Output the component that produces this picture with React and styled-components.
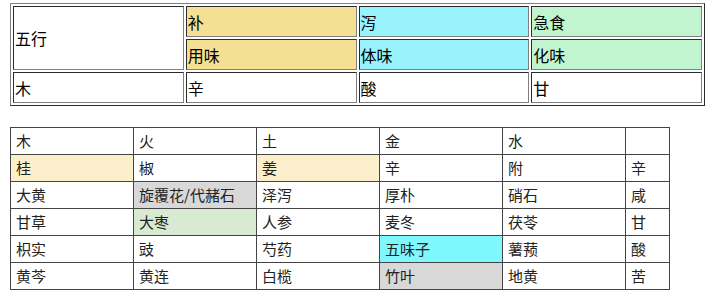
import React from "react";
import styled, { createGlobalStyle } from "styled-components";

const GlobalStyle = createGlobalStyle`
  body {
    margin: 0;
    padding: 3px 10px;
    background: #fff;
    font-family: "Noto Sans CJK SC", "Noto Sans", sans-serif;
    color: #000;
  }
`;

// Color fills used by cells
const fills = {
  bu: "#f5df93",
  xie: "#98f3fd",
  ji: "#c1f5cf",
  cream: "#fcf0cc",
  gray: "#d8d8d8",
  green: "#d9ead3",
  cyan: "#7ef8fc",
  none: "transparent",
};

// Top summary table: classic border="1" look
const WuxingTable = styled.table`
  width: 695px;
  border: 1px outset #808080;
  border-spacing: 2px;
  font-size: 16px;
`;

const WCell = styled.td`
  width: 25%;
  height: 27px;
  padding: 1px;
  border: 1px inset #808080;
  background: ${(p) => fills[p.$fill || "none"]};
  vertical-align: middle;
  line-height: 22px;
`;

// Lower herb table
const HerbTable = styled.table`
  margin-top: 21px;
  width: 659px;
  table-layout: fixed;
  border-collapse: collapse;
  font-size: 15px;
  color: #222;
`;

const HCell = styled.td`
  width: ${(p) => (p.$narrow ? "33px" : "112px")};
  height: 26px;
  padding: 0 5px;
  border: 1px solid #444;
  background: ${(p) => fills[p.$fill || "none"]};
  line-height: 20px;
  vertical-align: middle;
  white-space: nowrap;
`;

const herbs = [
  [["木"], ["火"], ["土"], ["金"], ["水"], [""]],
  [["桂", "cream"], ["椒"], ["姜", "cream"], ["辛"], ["附"], ["辛"]],
  [["大黄"], ["旋覆花/代赭石", "gray"], ["泽泻"], ["厚朴"], ["硝石"], ["咸"]],
  [["甘草"], ["大枣", "green"], ["人参"], ["麦冬"], ["茯苓"], ["甘"]],
  [["枳实"], ["豉"], ["芍药"], ["五味子", "cyan"], ["薯蓣"], ["酸"]],
  [["黄芩"], ["黄连"], ["白榄"], ["竹叶", "gray"], ["地黄"], ["苦"]],
];

export default function App() {
  return (
    <>
      <GlobalStyle />
      <WuxingTable>
        <tbody>
          <tr>
            <WCell rowSpan={2}>五行</WCell>
            <WCell $fill="bu">补</WCell>
            <WCell $fill="xie">泻</WCell>
            <WCell $fill="ji">急食</WCell>
          </tr>
          <tr>
            <WCell $fill="bu">用味</WCell>
            <WCell $fill="xie">体味</WCell>
            <WCell $fill="ji">化味</WCell>
          </tr>
          <tr>
            <WCell>木</WCell>
            <WCell>辛</WCell>
            <WCell>酸</WCell>
            <WCell>甘</WCell>
          </tr>
        </tbody>
      </WuxingTable>

      <HerbTable>
        <tbody>
          {herbs.map((row, i) => (
            <tr key={i}>
              {row.map(([text, fill], j) => (
                <HCell key={j} $fill={fill} $narrow={j === 5}>
                  {text}
                </HCell>
              ))}
            </tr>
          ))}
        </tbody>
      </HerbTable>
    </>
  );
}
